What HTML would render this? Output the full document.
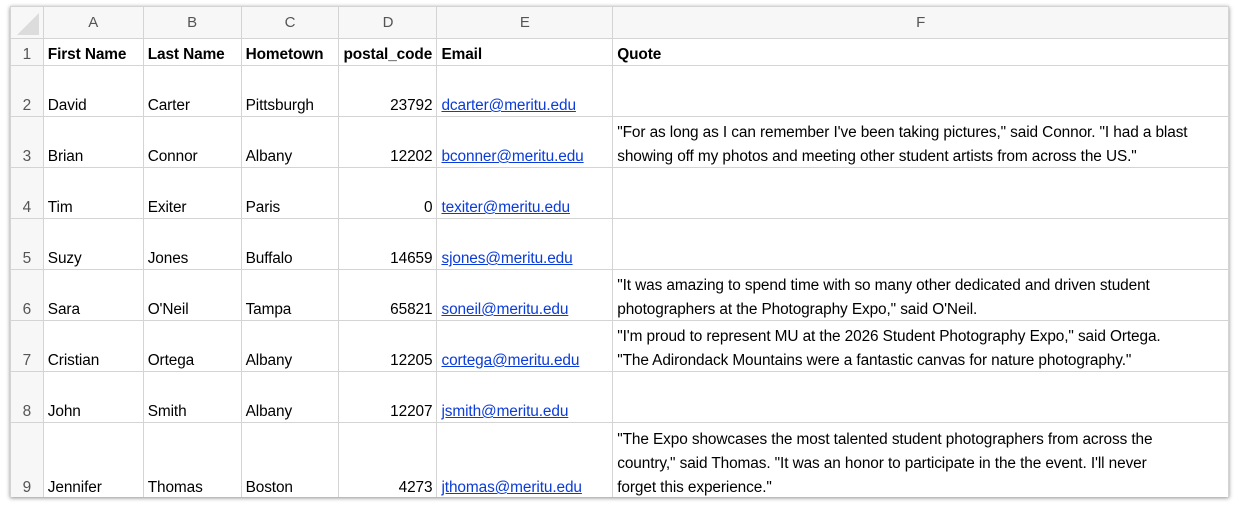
<!DOCTYPE html>
<html><head><style>
body{margin:0;background:#fff;width:1240px;height:510px;overflow:hidden;font-family:"Liberation Sans",sans-serif;}
.win{position:absolute;left:10px;top:6px;width:1219px;height:491px;box-shadow:0 1px 4px rgba(0,0,0,.45);overflow:hidden;background:#fff}
table{border-collapse:collapse;table-layout:fixed;font-size:15.4px;color:#000;letter-spacing:-0.1px}
td{border:1px solid #d4d4d4;padding:0;white-space:nowrap;overflow:hidden;vertical-align:top}
td>div{display:flex;flex-direction:column;justify-content:flex-end;padding:0 4px 1px 4px;line-height:24px;overflow:hidden;position:relative;top:3px}
tr.h td{background:#f7f7f7;text-align:center;color:#555;vertical-align:middle;font-size:15px}
td.rh{background:#f7f7f7;color:#555}
td.rh>div{align-items:center;padding:0 0 1px 0}
.r>div{align-items:flex-end}
a{color:#0b3bd8;text-decoration:underline}
.n td>div{height:49px}
.t td>div{height:25px}
.nine td>div{height:74px}
</style></head><body>
<div class="win">
<table>
<colgroup><col style="width:33px"><col style="width:100px"><col style="width:98px"><col style="width:98px"><col style="width:98px"><col style="width:176px"><col style="width:616px"></colgroup>
<tr class="h" style="height:32px"><td style="position:relative"><svg width="33" height="33" style="position:absolute;left:0;top:0"><polygon points="28,6 28,28 6,28" fill="#dcdcdc"/></svg></td><td>A</td><td>B</td><td>C</td><td>D</td><td>E</td><td>F</td></tr>
<tr class="t"><td class="rh"><div>1</div></td><td><div><b>First Name</b></div></td><td><div><b>Last Name</b></div></td><td><div><b>Hometown</b></div></td><td><div><b>postal_code</b></div></td><td><div><b>Email</b></div></td><td><div><b>Quote</b></div></td></tr>
<tr class="n"><td class="rh"><div>2</div></td><td><div>David</div></td><td><div>Carter</div></td><td><div>Pittsburgh</div></td><td class="r"><div>23792</div></td><td><div><a>dcarter@meritu.edu</a></div></td><td><div></div></td></tr>
<tr class="n"><td class="rh"><div>3</div></td><td><div>Brian</div></td><td><div>Connor</div></td><td><div>Albany</div></td><td class="r"><div>12202</div></td><td><div><a>bconner@meritu.edu</a></div></td><td><div><span>"For as long as I can remember I've been taking pictures," said Connor. "I had a blast</span><span>showing off my photos and meeting other student artists from across the US."</span></div></td></tr>
<tr class="n"><td class="rh"><div>4</div></td><td><div>Tim</div></td><td><div>Exiter</div></td><td><div>Paris</div></td><td class="r"><div>0</div></td><td><div><a>texiter@meritu.edu</a></div></td><td><div></div></td></tr>
<tr class="n"><td class="rh"><div>5</div></td><td><div>Suzy</div></td><td><div>Jones</div></td><td><div>Buffalo</div></td><td class="r"><div>14659</div></td><td><div><a>sjones@meritu.edu</a></div></td><td><div></div></td></tr>
<tr class="n"><td class="rh"><div>6</div></td><td><div>Sara</div></td><td><div>O'Neil</div></td><td><div>Tampa</div></td><td class="r"><div>65821</div></td><td><div><a>soneil@meritu.edu</a></div></td><td><div><span>"It was amazing to spend time with so many other dedicated and driven student</span><span>photographers at the Photography Expo," said O'Neil.</span></div></td></tr>
<tr class="n"><td class="rh"><div>7</div></td><td><div>Cristian</div></td><td><div>Ortega</div></td><td><div>Albany</div></td><td class="r"><div>12205</div></td><td><div><a>cortega@meritu.edu</a></div></td><td><div><span>"I'm proud to represent MU at the 2026 Student Photography Expo," said Ortega.</span><span>"The Adirondack Mountains were a fantastic canvas for nature photography."</span></div></td></tr>
<tr class="n"><td class="rh"><div>8</div></td><td><div>John</div></td><td><div>Smith</div></td><td><div>Albany</div></td><td class="r"><div>12207</div></td><td><div><a>jsmith@meritu.edu</a></div></td><td><div></div></td></tr>
<tr class="nine"><td class="rh"><div>9</div></td><td><div>Jennifer</div></td><td><div>Thomas</div></td><td><div>Boston</div></td><td class="r"><div>4273</div></td><td><div><a>jthomas@meritu.edu</a></div></td><td><div><span>"The Expo showcases the most talented student photographers from across the</span><span>country," said Thomas. "It was an honor to participate in the the event. I'll never</span><span>forget this experience."</span></div></td></tr>
</table>
</div>
</body></html>
